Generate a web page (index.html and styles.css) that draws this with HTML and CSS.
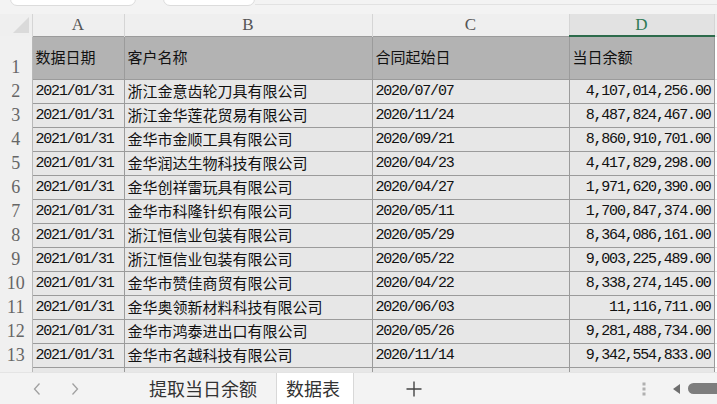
FILE: index.html
```html
<!DOCTYPE html>
<html lang="zh">
<head>
<meta charset="utf-8">
<link rel="stylesheet" href="styles.css">
</head>
<body>
<div class="topbar">
  <div class="tbox tbox-1"></div>
  <div class="tbox tbox-2"></div>
  <div class="tline"></div>
</div>
<div class="sheet">
  <table class="grid">
    <colgroup>
      <col class="c-rh"><col class="c-a"><col class="c-b"><col class="c-c"><col class="c-d"><col class="c-e">
    </colgroup>
    <thead>
      <tr class="colhead">
        <th class="corner"><span class="tri"></span></th>
        <th>A</th><th>B</th><th>C</th><th class="sel">D</th><th></th>
      </tr>
    </thead>
    <tbody>
      <tr class="r-title">
        <td class="rh rh-bottom">1</td>
        <td class="t">数据日期</td><td class="t">客户名称</td><td class="t">合同起始日</td><td class="t">当日余额</td><td class="e"></td>
      </tr>
      <tr><td class="rh">2</td><td class="m">2021/01/31</td><td class="cn">浙江金意齿轮刀具有限公司</td><td class="m">2020/07/07</td><td class="m num">4,107,014,256.00</td><td class="e"></td></tr>
      <tr><td class="rh">3</td><td class="m">2021/01/31</td><td class="cn">浙江金华莲花贸易有限公司</td><td class="m">2020/11/24</td><td class="m num">8,487,824,467.00</td><td class="e"></td></tr>
      <tr><td class="rh">4</td><td class="m">2021/01/31</td><td class="cn">金华市金顺工具有限公司</td><td class="m">2020/09/21</td><td class="m num">8,860,910,701.00</td><td class="e"></td></tr>
      <tr><td class="rh">5</td><td class="m">2021/01/31</td><td class="cn">金华润达生物科技有限公司</td><td class="m">2020/04/23</td><td class="m num">4,417,829,298.00</td><td class="e"></td></tr>
      <tr><td class="rh">6</td><td class="m">2021/01/31</td><td class="cn">金华创祥雷玩具有限公司</td><td class="m">2020/04/27</td><td class="m num">1,971,620,390.00</td><td class="e"></td></tr>
      <tr><td class="rh">7</td><td class="m">2021/01/31</td><td class="cn">金华市科隆针织有限公司</td><td class="m">2020/05/11</td><td class="m num">1,700,847,374.00</td><td class="e"></td></tr>
      <tr><td class="rh">8</td><td class="m">2021/01/31</td><td class="cn">浙江恒信业包装有限公司</td><td class="m">2020/05/29</td><td class="m num">8,364,086,161.00</td><td class="e"></td></tr>
      <tr><td class="rh">9</td><td class="m">2021/01/31</td><td class="cn">浙江恒信业包装有限公司</td><td class="m">2020/05/22</td><td class="m num">9,003,225,489.00</td><td class="e"></td></tr>
      <tr><td class="rh">10</td><td class="m">2021/01/31</td><td class="cn">金华市赞佳商贸有限公司</td><td class="m">2020/04/22</td><td class="m num">8,338,274,145.00</td><td class="e"></td></tr>
      <tr><td class="rh">11</td><td class="m">2021/01/31</td><td class="cn">金华奥领新材料科技有限公司</td><td class="m">2020/06/03</td><td class="m num">11,116,711.00</td><td class="e"></td></tr>
      <tr><td class="rh">12</td><td class="m">2021/01/31</td><td class="cn">金华市鸿泰进出口有限公司</td><td class="m">2020/05/26</td><td class="m num">9,281,488,734.00</td><td class="e"></td></tr>
      <tr><td class="rh">13</td><td class="m">2021/01/31</td><td class="cn">金华市名越科技有限公司</td><td class="m">2020/11/14</td><td class="m num">9,342,554,833.00</td><td class="e"></td></tr>
      <tr><td class="rh"></td><td class="m"></td><td class="cn"></td><td class="m"></td><td class="m num"></td><td class="e"></td></tr>
    </tbody>
  </table>
</div>
<div class="tabbar">
  <span class="nav nav-prev"><svg width="10" height="14" viewBox="0 0 10 14"><path d="M7.5 1.5 L2.5 7 L7.5 12.5" fill="none" stroke="#a0a0a0" stroke-width="1.3"/></svg></span>
  <span class="nav nav-next"><svg width="10" height="14" viewBox="0 0 10 14"><path d="M2.5 1.5 L7.5 7 L2.5 12.5" fill="none" stroke="#a0a0a0" stroke-width="1.3"/></svg></span>
  <span class="tab">提取当日余额</span>
  <span class="tab active"><span class="tab-label">数据表</span></span>
  <span class="add"><svg width="16" height="16" viewBox="0 0 16 16"><path d="M8 0.5 V15.5 M0.5 8 H15.5" stroke="#444" stroke-width="1.4"/></svg></span>
  <span class="spacer"></span>
  <span class="dots"><svg width="4" height="14" viewBox="0 0 4 14"><rect x="0.5" y="0.5" width="3" height="3" fill="#b0b0b0"/><rect x="0.5" y="5.5" width="3" height="3" fill="#b0b0b0"/><rect x="0.5" y="10.5" width="3" height="3" fill="#b0b0b0"/></svg></span>
  <span class="scroll"><span class="arrow"></span><span class="thumb"></span></span>
</div>
</body>
</html>
```
FILE: styles.css
```css
html, body {
  margin: 0;
  padding: 0;
}
body {
  width: 717px;
  height: 404px;
  overflow: hidden;
  background: #f2f2f2;
  font-family: "Noto Sans CJK SC", sans-serif;
}
.topbar {
  height: 14px;
  display: flex;
  align-items: flex-start;
  background: #f3f3f3;
}
.tbox {
  height: 10px;
  margin-top: -6px;
  background: #fff;
  border: 1px solid #dcdcdc;
  border-radius: 0 0 7px 7px;
}
.tbox-1 { margin-left: 10px; width: 124px; }
.tbox-2 { margin-left: 27px; width: 90px; }
.tline {
  flex: 1;
  height: 1px;
  margin-top: 4px;
  background: #e2e2e2;
}
.sheet {
  height: 358px;
  overflow: hidden;
  background: #fff;
}
.grid {
  border-collapse: collapse;
  table-layout: fixed;
  width: 740px;
}
.c-rh { width: 32px; }
.c-a { width: 92px; }
.c-b { width: 248px; }
.c-c { width: 197px; }
.c-d { width: 145px; }
.c-e { width: 26px; }
.grid th, .grid td {
  padding: 0;
  line-height: 1;
  white-space: nowrap;
  overflow: hidden;
}
.colhead {
  height: 22px;
}
.colhead th {
  background: #efefef;
  font-family: "Liberation Serif", serif;
  font-weight: normal;
  font-size: 17px;
  color: #555;
  border-left: 1px solid #d5d5d5;
  text-align: center;
  vertical-align: middle;
}
.colhead th.corner {
  border-left: none;
  position: relative;
}
.tri {
  position: absolute;
  left: 13px;
  top: 3px;
  width: 0;
  height: 0;
  border-style: solid;
  border-width: 0 0 16px 16px;
  border-color: transparent transparent #dadada transparent;
}
.colhead th.sel {
  background: #e2e2e2;
  color: #2f7a55;
  border-bottom: 2px solid #2d6b4b;
}
tbody tr {
  height: 24px;
}
tbody tr.r-title {
  height: 43px;
}
tbody td {
  background: #e7e7e7;
  border: 1px solid #9b9b9b;
  vertical-align: middle;
}
.r-title td {
  background: #b3b3b3;
  font-size: 15px;
  color: #111;
  padding: 0 0 3px 3px;
}
.grid td.rh {
  background: #f0f0f0;
  color: #666;
  font-family: "Liberation Serif", serif;
  font-size: 18px;
  text-align: center;
  border: none;
  border-right: 1px solid #b8b8b8;
  padding: 0;
  vertical-align: middle;
}
.grid td.rh-bottom {
  vertical-align: bottom;
  padding-bottom: 3px;
}
td.m {
  font-family: "Liberation Mono", monospace;
  font-size: 15px;
  letter-spacing: -1.2px;
  color: #111;
  padding-left: 3px;
}
td.cn {
  font-size: 15px;
  color: #111;
  padding: 0 0 2px 3px;
}
td.num {
  text-align: right;
  padding-right: 3px;
  padding-left: 0;
}
td.e {
  background: #fff;
  border-left: 1px solid #9b9b9b;
  border-top: 1px solid #e2e2e2;
  border-bottom: 1px solid #e2e2e2;
}
.tabbar {
  height: 32px;
  display: flex;
  align-items: stretch;
  background: #f3f3f3;
  border-top: 1px solid #e4e4e4;
  box-sizing: border-box;
  color: #333;
}
.nav {
  display: flex;
  align-items: center;
  justify-content: center;
  width: 10px;
}
.nav-prev { margin-left: 32px; }
.nav-next { margin-left: 28px; }
.tab {
  display: flex;
  align-items: center;
  font-size: 18px;
  padding: 0 19px 2px 69px;
  border-right: 1px solid #d8d8d8;
}
.tab.active {
  background: #fff;
  padding: 0 13px 2px 9px;
}
.tab-label {
  position: relative;
}
.tab-label::after {
  content: "";
  position: absolute;
  left: 0;
  right: 0;
  bottom: -6px;
  height: 2px;
  background: #2d6b4b;
}
.add {
  display: flex;
  align-items: center;
  margin-left: 52px;
}
.spacer { flex: 1; }
.dots {
  display: flex;
  align-items: center;
  margin-right: 27px;
}
.scroll {
  display: flex;
  align-items: center;
  width: 44px;
}
.arrow {
  width: 0;
  height: 0;
  border-style: solid;
  border-width: 5px 7px 5px 0;
  border-color: transparent #6e6e6e transparent transparent;
  margin-right: 8px;
}
.thumb {
  flex: 1;
  height: 11px;
  background: #7d7d7d;
  border-radius: 6px 0 0 6px;
}
```
